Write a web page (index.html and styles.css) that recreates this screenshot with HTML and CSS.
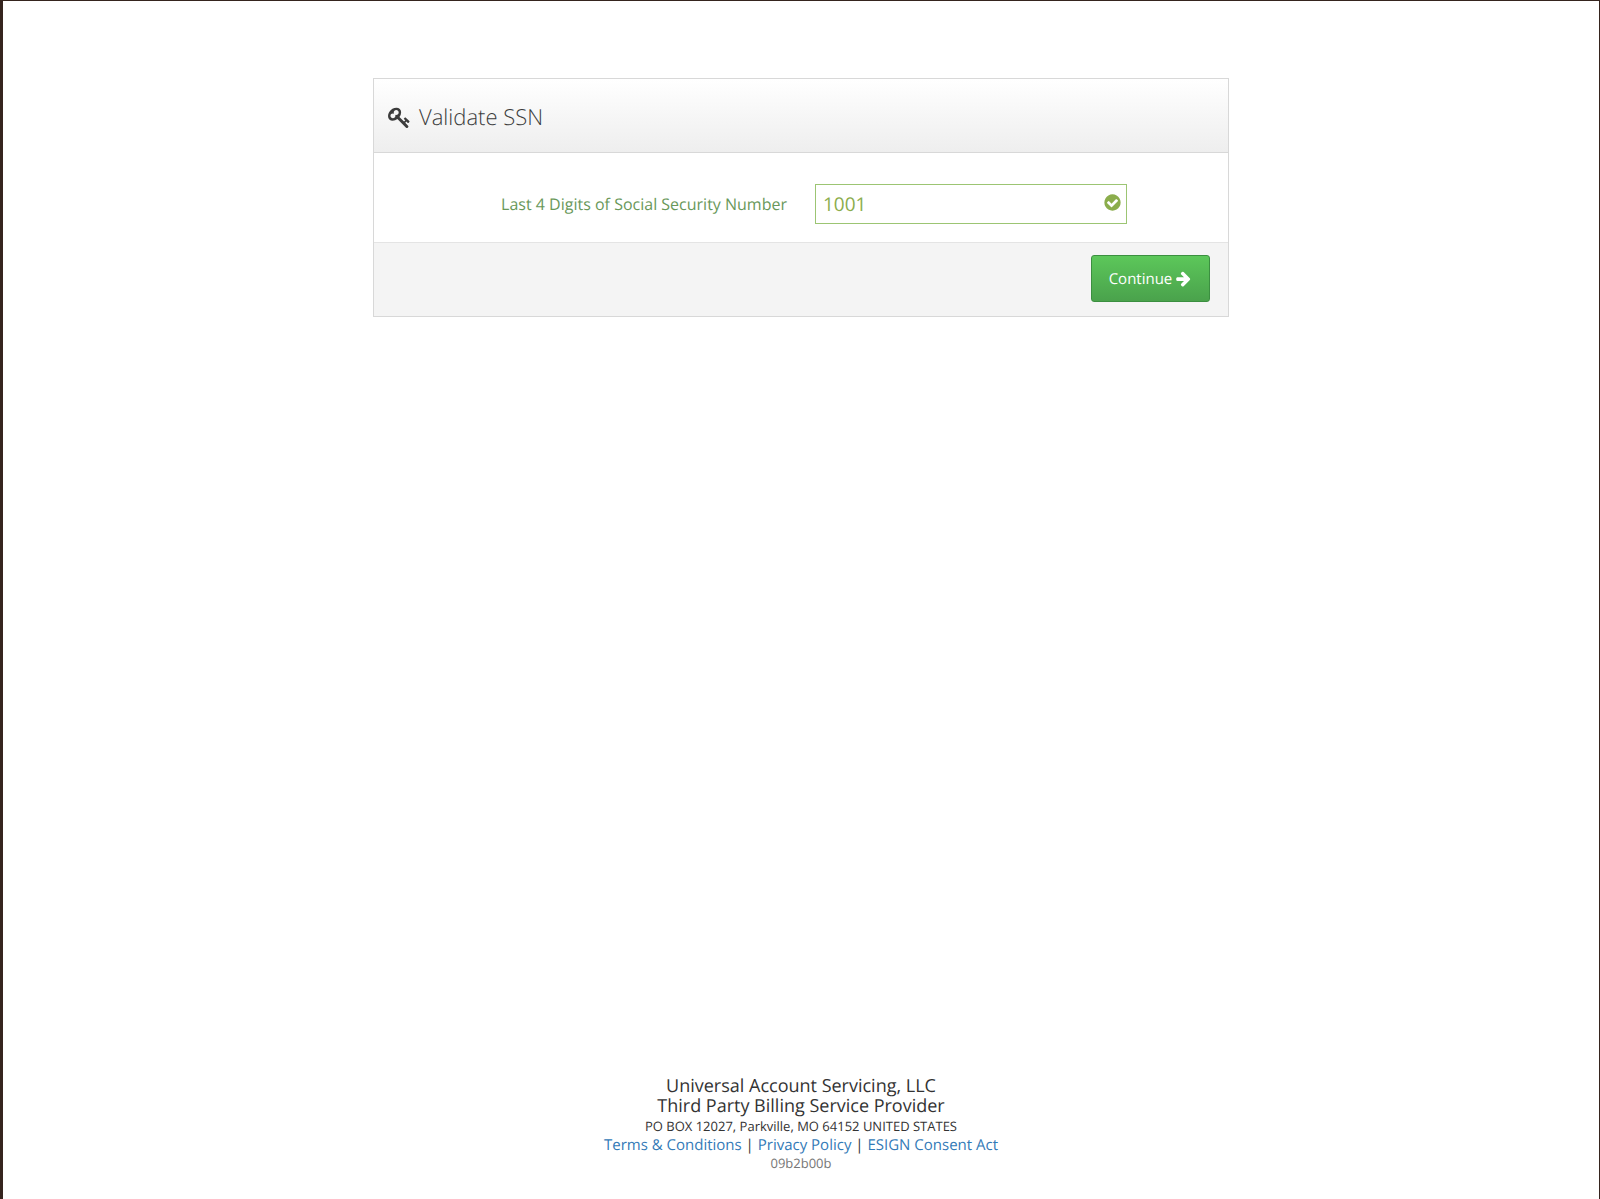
FILE: index.html
```html
<!DOCTYPE html>
<html lang="en">
<head>
<meta charset="utf-8">
<meta name="viewport" content="width=device-width, initial-scale=1">
<title>Validate SSN</title>
<link rel="stylesheet" href="styles.css">
</head>
<body>
<div class="page">
  <main class="content">
    <form class="card">
      <header class="card-header">
        <svg class="icon-key" viewBox="0 0 1792 1792" aria-hidden="true"><path d="M832 512q0-80-56-136t-136-56-136 56-56 136q0 42 19 83-41-19-83-19-80 0-136 56t-56 136 56 136 136 56 136-56 56-136q0-42-19-83 41 19 83 19 80 0 136-56t56-136zm851 704q0 17-49 66t-66 49q-9 0-28.5-16t-36.5-33-38.5-40-24.5-26l-96 96 220 220q28 28 28 68 0 42-39 81t-81 39q-40 0-68-28l-671-671q-176 131-365 131-163 0-265.500-102.500t-102.500-265.500q0-160 95-313t248-248 313-95q163 0 265.500 102.500t102.500 265.500q0 189-131 365l355 355 96-96q-3-3-26-24.500t-40-38.500-33-36.500-16-28.500q0-17 49-66t66-49q13 0 23 10 6 6 46 44.500t82 79.500 86.500 86 73 78 28.500 41z"/></svg>
        <h1 class="card-title">Validate SSN</h1>
      </header>
      <div class="card-body">
        <label class="field-label" for="ssn">Last 4 Digits of Social Security Number</label>
        <div class="field">
          <input class="field-input" id="ssn" type="text" inputmode="numeric" maxlength="4" value="1001">
          <svg class="icon-check" viewBox="0 0 1792 1792" aria-hidden="true"><path d="M1412 734q0-28-18-46l-91-90q-19-19-45-19t-45 19l-408 407-226-226q-19-19-45-19t-45 19l-91 90q-18 18-18 46 0 27 18 45l362 362q19 19 45 19 27 0 46-19l543-543q18-18 18-45zm252 162q0 209-103 385.500t-279.500 279.500-385.500 103-385.500-103-279.500-279.500-103-385.500 103-385.500 279.500-279.500 385.500-103 385.500 103 279.500 279.500 103 385.500z"/></svg>
        </div>
      </div>
      <footer class="card-footer">
        <button class="button" type="button">Continue
          <svg class="icon-arrow" viewBox="0 0 1792 1792" aria-hidden="true"><path d="M1600 960q0 54-37 91l-651 651q-39 37-91 37-51 0-90-37l-75-75q-38-38-38-91t38-91l293-293h-704q-52 0-84.500-37.500t-32.500-90.500v-128q0-53 32.500-90.500t84.500-37.500h704l-293-294q-38-36-38-90t38-90l75-75q38-38 90-38 53 0 91 38l651 651q37 35 37 90z"/></svg>
        </button>
      </footer>
    </form>
  </main>
  <footer class="site-footer">
    <p class="company">Universal Account Servicing, LLC</p>
    <p class="company">Third Party Billing Service Provider</p>
    <p class="address">PO BOX 12027, Parkville, MO 64152 UNITED STATES</p>
    <nav class="links"><a href="#">Terms &amp; Conditions</a> | <a href="#">Privacy Policy</a> | <a href="#">ESIGN Consent Act</a></nav>
    <p class="version">09b2b00b</p>
  </footer>
</div>
</body>
</html>
```
FILE: styles.css
```css
*, *::before, *::after {
  box-sizing: border-box;
}

body {
  margin: 0;
  background: #fff;
  color: #333;
  font-family: "Open Sans", "Liberation Sans", sans-serif;
  font-size: 15px;
  text-rendering: geometricPrecision;
}

.page {
  display: flex;
  flex-direction: column;
  min-height: 100vh;
  border: 1px solid #35241e;
  border-left-width: 3px;
  border-bottom: 0;
}

.content {
  flex: 1;
  padding: 77px 16px 32px;
}

.card {
  max-width: 856px;
  margin: 0 auto;
  border: 1px solid #d8d8d8;
}

.card-header {
  display: flex;
  align-items: center;
  gap: 8px;
  height: 74px;
  padding: 3px 14px 0;
  border-bottom: 1px solid #d8d8d8;
  background: linear-gradient(#fff, #eee);
  color: #3c3c3c;
}

.card-title {
  margin: 0;
  font-size: 22px;
  font-weight: 300;
  line-height: 32px;
}

.icon-key {
  width: 23px;
  height: 23px;
  fill: currentColor;
}

.card-body {
  display: grid;
  grid-template-columns: 1fr 312px;
  column-gap: 28px;
  align-items: center;
  padding: 31px 101px 18px;
}

.field-label {
  color: #69985a;
  font-size: 16px;
  line-height: 24px;
  text-align: right;
}

.field {
  position: relative;
}

.field-input {
  display: block;
  width: 100%;
  height: 40px;
  padding: 0 40px 0 7px;
  border: 1px solid #9cc573;
  border-radius: 0;
  background: #fff;
  color: #8bad4c;
  font-family: inherit;
  font-size: 19px;
  text-rendering: inherit;
}

.icon-check {
  position: absolute;
  top: 9px;
  right: 5px;
  width: 19px;
  height: 19px;
  fill: #8bad4c;
}

.card-footer {
  display: flex;
  justify-content: flex-end;
  padding: 12px 18px 14px;
  border-top: 1px solid #e4e4e4;
  background: #f4f4f4;
}

.button {
  display: flex;
  align-items: center;
  justify-content: center;
  gap: 3px;
  width: 119px;
  height: 47px;
  padding: 0;
  border: 1px solid #3b8f40;
  border-radius: 3px;
  background: linear-gradient(#5cc75a, #4aa24c);
  color: #fff;
  font-family: inherit;
  font-size: 15px;
  text-rendering: inherit;
}

.icon-arrow {
  width: 17px;
  height: 17px;
  fill: currentColor;
}

.site-footer {
  padding: 0 16px 27px;
  text-align: center;
}

.site-footer p {
  margin: 0;
}

.company {
  font-size: 18px;
  line-height: 20px;
}

.address {
  font-size: 13px;
  line-height: 20px;
}

.links {
  font-size: 15px;
  line-height: 18px;
}

.links a {
  color: #337ab7;
  text-decoration: none;
}

.version {
  color: #777;
  font-size: 13px;
  line-height: 18px;
}
```
